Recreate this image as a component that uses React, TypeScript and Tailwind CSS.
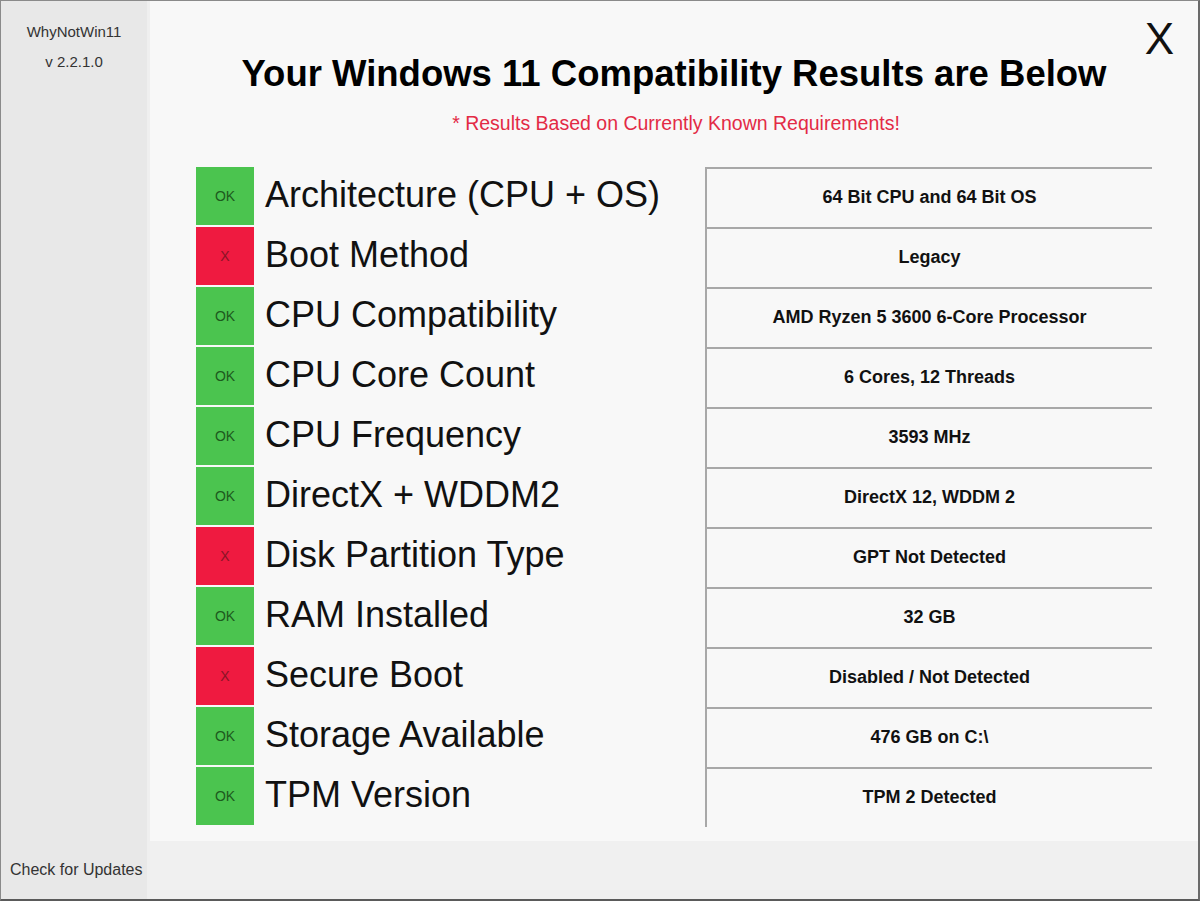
import React from "react";

type Row = { ok: boolean; label: string; value: string };

const rows: Row[] = [
  { ok: true, label: "Architecture (CPU + OS)", value: "64 Bit CPU and 64 Bit OS" },
  { ok: false, label: "Boot Method", value: "Legacy" },
  { ok: true, label: "CPU Compatibility", value: "AMD Ryzen 5 3600 6-Core Processor" },
  { ok: true, label: "CPU Core Count", value: "6 Cores, 12 Threads" },
  { ok: true, label: "CPU Frequency", value: "3593 MHz" },
  { ok: true, label: "DirectX + WDDM2", value: "DirectX 12, WDDM 2" },
  { ok: false, label: "Disk Partition Type", value: "GPT Not Detected" },
  { ok: true, label: "RAM Installed", value: "32 GB" },
  { ok: false, label: "Secure Boot", value: "Disabled / Not Detected" },
  { ok: true, label: "Storage Available", value: "476 GB on C:\\" },
  { ok: true, label: "TPM Version", value: "TPM 2 Detected" },
];

export default function App() {
  return (
    <div
      className="w-[1200px] h-[901px] flex border-t border-l border-r-2 border-b-2 border-t-[#8a8a8a] border-l-[#8a8a8a] border-r-[#6a6a6a] border-b-[#5a5a5a] overflow-hidden"
      style={{ fontFamily: '"Liberation Sans", Arial, sans-serif' }}
    >
      <aside className="w-[149px] shrink-0 bg-[#e8e8e8] border-r-[3px] border-[#efefef] flex flex-col justify-between">
        <div className="flex flex-col items-center pt-[21px] text-[#333] text-[15px] leading-[20px]">
          <div>WhyNotWin11</div>
          <div className="mt-[10px]">v 2.2.1.0</div>
        </div>
        <div className="pl-[9px] pb-[19px] text-[16px] leading-[20px] text-[#333]">Check for Updates</div>
      </aside>

      <main className="flex-1 flex flex-col bg-[#f8f8f8] relative">
        <div className="absolute right-[24px] top-[14px] text-[44px] leading-[48px] text-[#111]">X</div>

        <div className="flex-1 flex flex-col">
          <h1 className="mt-[53px] text-center text-[36.5px] leading-[40px] font-bold text-black">
            Your Windows 11 Compatibility Results are Below
          </h1>
          <p className="mt-[18px] text-center text-[19.5px] leading-[22px] text-[#e32a45] pl-[4px]">
            * Results Based on Currently Known Requirements!
          </p>

          <div className="mt-[33px] ml-[46px] flex flex-col">
            {rows.map((r, i) => (
              <div key={i} className="flex h-[60px]">
                <div className="w-[509px] flex items-start">
                  <div
                    className={
                      "w-[58px] h-[58px] flex items-center justify-center text-[14px] " +
                      (r.ok ? "bg-[#4bc44f] text-[#1d5a1d]" : "bg-[#ef1a40] text-[#8a1426]")
                    }
                  >
                    {r.ok ? "OK" : "X"}
                  </div>
                  <div className="h-[58px] flex items-center pl-[11px] text-[36px] leading-[40px] text-[#111] pb-[2px]">
                    {r.label}
                  </div>
                </div>
                <div className="w-[447px] h-[60px] border-t-2 border-l-2 border-[#a8a8a8] flex items-center justify-center text-[18px] font-bold text-[#111] pb-[2px]">
                  {r.value}
                </div>
              </div>
            ))}
          </div>
        </div>

        <div className="h-[58px] bg-[#f0f0f0]" />
      </main>
    </div>
  );
}
